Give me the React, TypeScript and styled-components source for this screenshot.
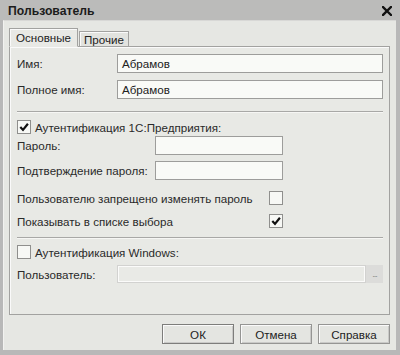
import React from "react";
import styled, { createGlobalStyle } from "styled-components";

const Global = createGlobalStyle`
  html, body { margin: 0; padding: 0; background: #b9b9b9; }
  body { font-family: "Liberation Sans", Arial, sans-serif; font-size: 11.6px; color: #2a2a2a; }
`;

const Frame = styled.div`
  width: 400px;
  height: 355px;
  box-sizing: border-box;
  background: #b8b8b8;
  display: flex;
  flex-direction: column;
`;

const TitleBar = styled.div`
  height: 20px;
  flex: none;
  display: flex;
  align-items: center;
  justify-content: space-between;
  padding: 0 8px 0 8px;
  background: #bbbbba;
`;

const Title = styled.span`
  font-weight: bold;
  font-size: 12.2px;
  color: #1c1c1c;
  margin-top: 1px;
`;

const CloseIcon = styled.svg`
  display: block;
  margin-top: 2px;
`;

const Client = styled.div`
  flex: 1;
  margin: 0 4px 5px 3px;
  background: #e6e7e3;
  border-top: 1px solid #d8d8d6;
  border-left: 1px solid #f2f2f0;
  box-sizing: border-box;
  padding: 7px 6px 6px 5px;
  display: flex;
  flex-direction: column;
`;

const Tabs = styled.div`
  display: flex;
  align-items: flex-end;
  height: 19px;
  position: relative;
  z-index: 1;
`;

const Tab = styled.div<{ $active?: boolean }>`
  box-sizing: border-box;
  height: ${(p) => (p.$active ? "19px" : "16px")};
  padding: 0 ${(p) => (p.$active ? "6px" : "4px")};
  margin-right: ${(p) => (p.$active ? "1px" : "0")};
  display: flex;
  align-items: center;
  border: 1px solid #a2a2a0;
  border-bottom: ${(p) => (p.$active ? "1px solid #e8e9e5" : "1px solid #a2a2a0")};
  background: ${(p) => (p.$active ? "#e8e9e5" : "#e2e3df")};
  box-shadow: inset 1px 1px 0 #fafafa;
  color: #222;
`;

const Panel = styled.div`
  flex: 1;
  margin-top: -1px;
  border: 1px solid #a2a2a0;
  box-shadow: inset 1px 1px 0 #fafafa;
  background: #e8e9e5;
  padding: 7px 6px 0 7px;
  display: flex;
  flex-direction: column;
`;

const Row = styled.div<{ $h?: number; $mt?: number }>`
  display: flex;
  align-items: center;
  height: ${(p) => p.$h ?? 19}px;
  margin-top: ${(p) => p.$mt ?? 0}px;
`;

const Label = styled.span<{ $w?: number }>`
  width: ${(p) => (p.$w ? `${p.$w}px` : "auto")};
  flex: ${(p) => (p.$w ? "none" : "1")};
  color: #2a2a2a;
  white-space: nowrap;
`;

const Input = styled.div<{ $w?: number }>`
  box-sizing: border-box;
  height: 100%;
  width: ${(p) => (p.$w ? `${p.$w}px` : "auto")};
  flex: ${(p) => (p.$w ? "none" : "1")};
  border: 1px solid #9d9d9b;
  background: #f9faf7;
  display: flex;
  align-items: center;
  padding-left: 4px;
  color: #222;
`;

const DisabledInput = styled.div`
  box-sizing: border-box;
  height: 100%;
  flex: 1;
  border: 1px solid #d2d2d0;
  box-shadow: inset 0 0 0 1px #fbfbfa;
  background: #e9eae6;
`;

const DotsButton = styled.div`
  box-sizing: border-box;
  width: 17px;
  height: 100%;
  flex: none;
  background: #dcdcda;
  color: #888;
  font-size: 9px;
  display: flex;
  align-items: center;
  justify-content: center;
  letter-spacing: -1px;
`;

const Separator = styled.div<{ $mt: number }>`
  height: 0;
  border-top: 1px solid #a8a8a6;
  border-bottom: 1px solid #f6f6f4;
  margin-top: ${(p) => p.$mt}px;
`;

const Box = styled.div<{ $gap?: number }>`
  box-sizing: border-box;
  width: 14px;
  height: 14px;
  flex: none;
  border: 1px solid #8f8f8d;
  background: #f7f8f5;
  margin-right: ${(p) => p.$gap ?? 0}px;
  display: flex;
  align-items: center;
  justify-content: center;
`;

const Buttons = styled.div`
  display: flex;
  justify-content: flex-end;
  gap: 6px;
  margin-top: 9px;
`;

const Button = styled.div<{ $default?: boolean }>`
  box-sizing: border-box;
  width: 72px;
  height: 20px;
  border: 1px solid ${(p) => (p.$default ? "#7d7d7b" : "#959593")};
  box-shadow: inset 1px 1px 0 #fafafa, inset -1px -1px 0 #c9c9c7;
  background: #e4e5e1;
  display: flex;
  align-items: center;
  justify-content: center;
  color: #222;
`;

const Check = () => (
  <svg width="10" height="10" viewBox="0 0 10 10">
    <path d="M1.3 5 L4 7.9 L8.9 1.8" fill="none" stroke="#111" strokeWidth="2.2" />
  </svg>
);

const CheckBox = ({ checked, gap }: { checked?: boolean; gap?: number }) => (
  <Box $gap={gap}>{checked ? <Check /> : null}</Box>
);

export default function App() {
  return (
    <>
      <Global />
      <Frame>
        <TitleBar>
          <Title>Пользователь</Title>
          <CloseIcon width="10" height="10" viewBox="0 0 10 10">
            <path d="M1 1 L9 9 M9 1 L1 9" stroke="#111" strokeWidth="2.4" strokeLinecap="square" />
          </CloseIcon>
        </TitleBar>
        <Client>
          <Tabs>
            <Tab $active>Основные</Tab>
            <Tab>Прочие</Tab>
          </Tabs>
          <Panel>
            <Row>
              <Label $w={100}>Имя:</Label>
              <Input>Абрамов</Input>
            </Row>
            <Row $mt={7}>
              <Label $w={100}>Полное имя:</Label>
              <Input>Абрамов</Input>
            </Row>
            <Separator $mt={12} />
            <Row $h={16} $mt={6}>
              <CheckBox checked gap={4} />
              <Label>Аутентификация 1С:Предприятия:</Label>
            </Row>
            <Row $mt={1}>
              <Label $w={138}>Пароль:</Label>
              <Input $w={128} />
            </Row>
            <Row $mt={6}>
              <Label $w={138}>Подтверждение пароля:</Label>
              <Input $w={128} />
            </Row>
            <Row $h={16} $mt={10}>
              <Label $w={252}>Пользователю запрещено изменять пароль</Label>
              <CheckBox />
            </Row>
            <Row $h={16} $mt={7}>
              <Label $w={252}>Показывать в списке выбора</Label>
              <CheckBox checked />
            </Row>
            <Separator $mt={8} />
            <Row $h={16} $mt={5}>
              <CheckBox gap={4} />
              <Label>Аутентификация Windows:</Label>
            </Row>
            <Row $h={18} $mt={5}>
              <Label $w={100}>Пользователь:</Label>
              <DisabledInput />
              <DotsButton>...</DotsButton>
            </Row>
          </Panel>
          <Buttons>
            <Button $default>ОК</Button>
            <Button>Отмена</Button>
            <Button>Справка</Button>
          </Buttons>
        </Client>
      </Frame>
    </>
  );
}
